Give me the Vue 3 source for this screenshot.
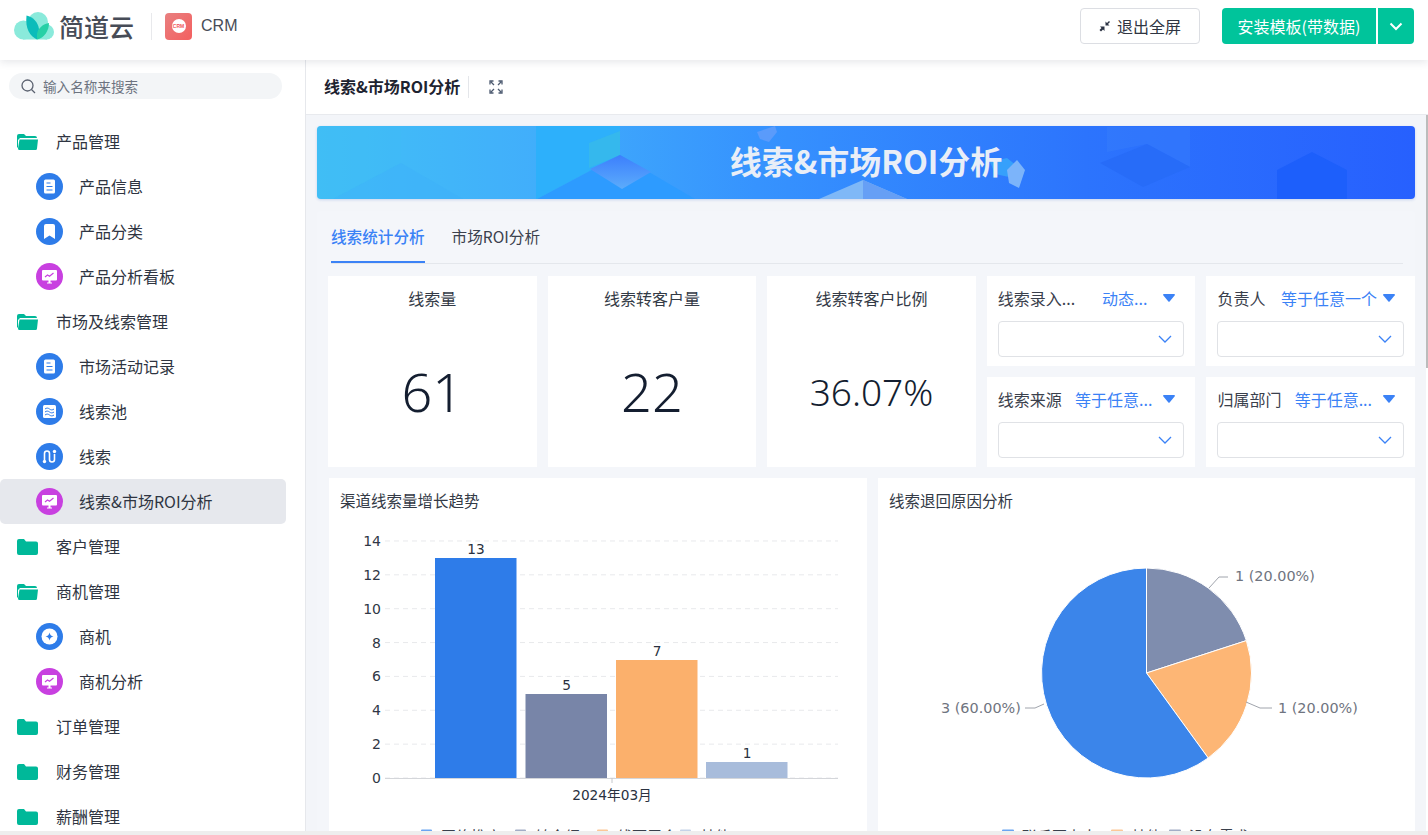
<template>
  <div class="page">
    <header class="topbar">
      <div class="brand">
        <svg class="logo" width="40" height="28" viewBox="14 12 40 28">
          <circle cx="23.500" cy="30" r="9.500" fill="#8aeadb" />
          <circle cx="38" cy="22" r="10" fill="#8aeadb" />
          <circle cx="46.500" cy="32" r="7.500" fill="#8aeadb" />
          <rect x="23" y="24" width="24" height="15.500" fill="#8aeadb" />
          <path d="M37 39.500C30 36 25 29 26.500 15.500C33 17 38 22 39 29Z" fill="#0bbcba" />
          <path d="M37 39.500C44 38 49 31 49 23C43 24 38 28 37 34Z" fill="#27d0a6" />
        </svg>
        <span class="brand-name">简道云</span>
        <i class="brand-split"></i>
        <div class="app-tile">
          <span class="app-dot">CRM</span>
        </div>
        <span class="app-name">CRM</span>
      </div>
      <div class="actions">
        <button class="btn-exit">
          <svg width="12" height="12" viewBox="0 0 12 12" fill="#2b3243">
            <path d="M5.500 6.500V11L4 9.500 2 11.500 .5 10 2.500 8 1 6.500Z" />
            <path d="M6.500 5.500V1.500L8 3 10 1 11 2 9 4 10.500 5.500Z" />
          </svg>
          退出全屏
        </button>
        <div class="install">
          <button class="btn-install">安装模板(带数据)</button>
          <button class="btn-more">
            <svg width="14" height="9" viewBox="0 0 14 9" fill="none" stroke="#fff" stroke-width="2">
              <path d="M1.500 1.500 7 7l5.500-5.500" />
            </svg>
          </button>
        </div>
      </div>
    </header>

    <div class="body">
      <aside class="sidebar">
        <div class="search">
          <svg width="15" height="15" viewBox="0 0 15 15" fill="none" stroke="#5b6270" stroke-width="1.300">
            <circle cx="6.500" cy="6.500" r="5.500" />
            <path d="M10.500 10.500 14 14" />
          </svg>
          <span>输入名称来搜索</span>
        </div>
        <ul class="menu">
          <li
            v-for="item in menu"
            :key="item.label"
            :class="[item.icon ? 'child' : 'group', { active: item.active }]"
          >
            <template v-if="!item.icon">
              <svg width="21" height="16" viewBox="0 0 21 16">
                <template v-if="item.open">
                  <path d="M0 2a2 2 0 0 1 2-2h5l2 2h9a2 2 0 0 1 2 2H3L1 6v8L0 13Z" fill="#00b899" />
                  <path d="M2.500 5.500H21l-1 9a1.500 1.500 0 0 1-1.500 1.500H2.500A1.500 1.500 0 0 1 1 14.500Z" fill="#00b899" />
                </template>
                <path v-else d="M0 2a2 2 0 0 1 2-2h5l2 2.500h10a2 2 0 0 1 2 2V14a2 2 0 0 1-2 2H2a2 2 0 0 1-2-2Z" fill="#00b899" />
              </svg>
            </template>
            <span v-else class="badge" :class="item.icon === 'board' ? 'purple' : 'blue'">
              <svg width="27" height="27" viewBox="0 0 27 27">
                <template v-if="item.icon === 'doc'">
                  <rect x="8" y="6.500" width="11" height="14" rx="1.500" fill="#fff" />
                  <path d="M10.500 10h4M10.500 13.500h6M10.500 17h6" stroke="#2e7ce9" stroke-width="1.200" />
                </template>
                <path v-if="item.icon === 'mark'" d="M8 8a2 2 0 0 1 2-2h7a2 2 0 0 1 2 2v13l-5.500-3.500L8 21Z" fill="#fff" />
                <template v-if="item.icon === 'board'">
                  <rect x="6" y="7" width="15" height="10.500" rx="1" fill="#fff" />
                  <path d="M11 19.500h5v1h-5ZM12.500 17h2v3h-2Z" fill="#fff" />
                  <path d="M9 14l2.500-2 2 1.200L17.500 10" fill="none" stroke="#c840e0" stroke-width="1.200" />
                </template>
                <template v-if="item.icon === 'wave'">
                  <rect x="7" y="7" width="13" height="13" rx="1.500" fill="#fff" />
                  <path d="M9 11c1.500-1.200 3-1.200 4.500 0s3 1.200 4.500 0M9 14c1.500-1.200 3-1.200 4.500 0s3 1.200 4.500 0M9 17c1.500-1.200 3-1.200 4.500 0s3 1.200 4.500 0" fill="none" stroke="#2e7ce9" stroke-width="1" />
                </template>
                <template v-if="item.icon === 'flow'">
                  <path d="M8.500 17V10.500a2.500 2.500 0 0 1 5 0v6a2.500 2.500 0 0 0 5 0V11" fill="none" stroke="#fff" stroke-width="1.600" />
                  <circle cx="8.500" cy="18.500" r="1.700" fill="#fff" />
                  <circle cx="18.500" cy="8.500" r="1.700" fill="#fff" />
                </template>
                <template v-if="item.icon === 'star'">
                  <circle cx="13.500" cy="13.500" r="8" fill="#fff" />
                  <path d="M13.500 9.500c.5 2.500 1.500 3.500 4 4-2.500.5-3.500 1.500-4 4-.5-2.500-1.500-3.500-4-4 2.500-.5 3.500-1.500 4-4Z" fill="#2e7ce9" />
                </template>
              </svg>
            </span>
            <span class="menu-label">{{ item.label }}</span>
          </li>
        </ul>
      </aside>

      <main class="main">
        <div class="toolbar">
          <span class="toolbar-title">线索&amp;市场ROI分析</span>
          <i class="toolbar-split"></i>
          <svg width="14" height="14" viewBox="0 0 14 14" fill="none" stroke="#4c5a70" stroke-width="1.300">
            <path d="M1 4.500V1h3.500M9.500 1H13v3.500M13 9.500V13H9.500M4.500 13H1V9.500M2 2l3 3M12 2 9 5M12 12 9 9M2 12l3-3" />
          </svg>
        </div>
        <div class="content">
          <div class="banner">
            <svg class="banner-art" width="1098" height="73" viewBox="317 126 1098 73">
              <defs>
                <linearGradient id="bannerBg" x1="0" x2="1" y1="0" y2="0">
                  <stop offset="0" stop-color="#41c0f6" />
                  <stop offset=".2" stop-color="#41aefb" />
                  <stop offset=".4" stop-color="#3693fe" />
                  <stop offset=".7" stop-color="#2c74fd" />
                  <stop offset="1" stop-color="#2760fe" />
                </linearGradient>
                <linearGradient id="gem" x1="0" x2="0" y1="0" y2="1">
                  <stop offset="0" stop-color="#3c7ffd" />
                  <stop offset="1" stop-color="#5cacfb" />
                </linearGradient>
              </defs>
              <rect x="317" y="126" width="1098" height="73" fill="url(#bannerBg)" />
              <path d="M317 126h84v37l-68 36h-16Z" fill="#3fbcf4" opacity=".4" />
              <path d="M333 199 401 163l62 36Z" fill="#3cb0fb" opacity=".4" />
              <path d="M536 126h84v29l-83 44h-1Z" fill="#2db0fb" />
              <path d="M589 143 620 131V155L589 168Z" fill="#3dbfe0" opacity=".5" />
              <path d="M537 199 620 155l75 44Z" fill="#2d9bff" />
              <path d="M590 169 620 155l31 17-29 17Z" fill="url(#gem)" />
              <path d="M757 132l18-6 2 6-8 10-9-3Z" fill="#5a9bfb" />
              <path d="M819 199 863 180l44 19Z" fill="#7fb8f7" />
              <path d="M863 180l44 19h-44Z" fill="#669ff5" />
              <path d="M990 162l17-4 10 8-8 11-14-3Z" fill="#36a0fb" />
              <path d="M1007 170l10-10 8 10-6 18-10-5Z" fill="#7cb4fa" />
              <path d="M1107 127h83v40l-43-23-40 8Z" fill="#3a80fb" opacity=".4" />
              <path d="M1100 163l47-19 43 23-47 20Z" fill="#276cf8" />
              <path d="M1277 170l35-18 35 18v29h-70Z" fill="#1d5ffb" />
            </svg>
            <span class="banner-title">线索&amp;市场ROI分析</span>
          </div>

          <section class="panel">
            <div class="tabs">
              <span class="tab on">线索统计分析</span>
              <span class="tab">市场ROI分析</span>
            </div>

            <div class="top-grid">
              <div v-for="s in stats" :key="s.title" class="stat">
                <div class="stat-title">{{ s.title }}</div>
                <div class="stat-num" :class="{ small: s.small }">{{ s.value }}</div>
              </div>
              <div v-for="f in filters" :key="f.label" class="filter" :class="f.cls">
                <div class="filter-head">
                  <span class="filter-label">{{ f.label }}</span>
                  <span class="filter-op">{{ f.op }}</span>
                  <svg width="12" height="8" viewBox="0 0 12 8" fill="#3b82f6">
                    <path d="M.8 0h10.400a.8.8 0 0 1 .6 1.300L6.600 7.400a.8.8 0 0 1-1.200 0L.2 1.300A.8.8 0 0 1 .8 0Z" />
                  </svg>
                </div>
                <div class="filter-input">
                  <svg width="14" height="8" viewBox="0 0 14 8" fill="none" stroke="#3b82f6" stroke-width="1.300">
                    <path d="M1 1l6 6 6-6" />
                  </svg>
                </div>
              </div>
            </div>

            <div class="chart-grid">
              <div class="chart-card">
                <div class="chart-title">渠道线索量增长趋势</div>
                <svg class="chart" width="538" height="340" viewBox="329 524 538 340">
                  <line
                    v-for="t in ticks"
                    :key="t.label"
                    x1="385"
                    x2="838"
                    :y1="t.y"
                    :y2="t.y"
                    stroke="#e8e9ec"
                    stroke-dasharray="5 4"
                  />
                  <text
                    v-for="t in ticks"
                    :key="'l' + t.label"
                    x="381"
                    :y="t.y + 5"
                    text-anchor="end"
                    class="axis-text"
                  >{{ t.label }}</text>
                  <template v-for="b in bars" :key="b.x">
                    <rect :x="b.x" :y="b.y" width="81.500" :height="778 - b.y" :fill="b.color" />
                    <text :x="b.x + 41" :y="b.y - 4.500" text-anchor="middle" class="bar-text">{{ b.value }}</text>
                  </template>
                  <line x1="385" x2="838" y1="778.500" y2="778.500" stroke="#d4d6da" />
                  <line x1="612" x2="612" y1="778" y2="783" stroke="#c4c6ca" />
                  <text x="612" y="800" text-anchor="middle" class="bar-text">2024年03月</text>
                  <template v-for="l in barLegend" :key="l.x">
                    <rect :x="l.x" y="829.500" width="11" height="11" rx="1" :fill="l.color" />
                    <text :x="l.x + 20" y="842" class="legend-text">{{ l.text }}</text>
                  </template>
                </svg>
              </div>

              <div class="chart-card">
                <div class="chart-title">线索退回原因分析</div>
                <svg class="chart" width="537" height="340" viewBox="878 524 537 340">
                  <path d="M1146.500 673V568A105 105 0 0 1 1246.400 640.600Z" fill="#7f8dae" stroke="#fff" />
                  <path d="M1146.500 673 1246.400 640.600A105 105 0 0 1 1208.200 758Z" fill="#fdb675" stroke="#fff" />
                  <path d="M1146.500 673 1208.200 758A105 105 0 1 1 1146.500 568Z" fill="#3b85ea" stroke="#fff" />
                  <path d="M1209 588 1219 577H1228" class="leader" />
                  <path d="M1246 702 1260 708H1272" class="leader" />
                  <path d="M1044 704 1035 708H1025" class="leader" />
                  <text x="1235" y="581" class="pie-text">1 (20.00%)</text>
                  <text x="1278" y="713" class="pie-text">1 (20.00%)</text>
                  <text x="941" y="713" class="pie-text">3 (60.00%)</text>
                  <template v-for="l in pieLegend" :key="l.x">
                    <rect :x="l.x" y="829.500" width="12" height="11" rx="1" :fill="l.color" />
                    <text :x="l.x + 20" y="842" class="legend-text">{{ l.text }}</text>
                  </template>
                </svg>
              </div>
            </div>
          </section>
        </div>
        <i class="scroll-thumb"></i>
      </main>
    </div>
    <div class="bottom-strip"></div>
  </div>
</template>

<script setup>
const menu = [
  { label: '产品管理', open: true },
  { label: '产品信息', icon: 'doc' },
  { label: '产品分类', icon: 'mark' },
  { label: '产品分析看板', icon: 'board' },
  { label: '市场及线索管理', open: true },
  { label: '市场活动记录', icon: 'doc' },
  { label: '线索池', icon: 'wave' },
  { label: '线索', icon: 'flow' },
  { label: '线索&市场ROI分析', icon: 'board', active: true },
  { label: '客户管理' },
  { label: '商机管理', open: true },
  { label: '商机', icon: 'star' },
  { label: '商机分析', icon: 'board' },
  { label: '订单管理' },
  { label: '财务管理' },
  { label: '薪酬管理' },
]

const stats = [
  { title: '线索量', value: '61' },
  { title: '线索转客户量', value: '22' },
  { title: '线索转客户比例', value: '36.07%', small: true },
]

const filters = [
  { label: '线索录入...', op: '动态...', cls: 'f1' },
  { label: '负责人', op: '等于任意一个', cls: 'f2' },
  { label: '线索来源', op: '等于任意...', cls: 'f3' },
  { label: '归属部门', op: '等于任意...', cls: 'f4' },
]

// y axis of the bar chart: 0 sits at 778, one unit is 16.93px
const ticks = [14, 12, 10, 8, 6, 4, 2, 0].map((n) => ({ label: n, y: 778 - n * 16.93 }))

const bars = [
  { x: 435, y: 558, value: 13, color: '#2e7ce9' },
  { x: 525.5, y: 694, value: 5, color: '#7885a8' },
  { x: 616, y: 660, value: 7, color: '#fbb06c' },
  { x: 706, y: 762, value: 1, color: '#a8bcdb' },
]

// legend rows are cut by the page edge, only the top of the glyphs shows
const barLegend = [
  { x: 421, text: '网络推广', color: '#6aa5f2' },
  { x: 515, text: '转介绍', color: '#a3adc6' },
  { x: 597, text: '线下展会', color: '#fcc898' },
  { x: 680, text: '其他', color: '#c6d3e8' },
]

const pieLegend = [
  { x: 1002, text: '联系不上人', color: '#6aa5f2' },
  { x: 1111, text: '其他', color: '#fcc898' },
  { x: 1169, text: '没有需求', color: '#a3adc6' },
]
</script>

<style>
html,
body {
  margin: 0;
  height: 100%;
  overflow: hidden;
  background: #fff;
}
</style>

<style scoped>
.page {
  height: 835px;
  display: flex;
  flex-direction: column;
  font-family: "Noto Sans CJK SC", "Noto Sans", sans-serif;
  color: #2f3542;
  overflow: hidden;
}

.topbar {
  flex: none;
  height: 60px;
  padding: 0 14px;
  box-sizing: border-box;
  display: flex;
  align-items: flex-start;
  justify-content: space-between;
  background: #fff;
  box-shadow: 0 2px 8px rgba(40, 50, 70, 0.12);
  position: relative;
  z-index: 2;
}

.brand {
  display: flex;
  align-items: center;
  height: 52px;
}

.brand-name {
  margin-left: 5px;
  font-size: 25px;
  font-weight: 500;
  color: #474c57;
  white-space: nowrap;
}

.brand-split {
  width: 1px;
  height: 27px;
  margin: 0 13px 0 17px;
  background: #e8e9ec;
}

.app-tile {
  width: 27px;
  height: 27px;
  border-radius: 4px;
  background: linear-gradient(135deg, #e88080, #f45f5f);
  display: flex;
  align-items: center;
  justify-content: center;
}

.app-dot {
  width: 14px;
  height: 14px;
  border-radius: 50%;
  background: #fff;
  color: #f0585c;
  font-family: "Liberation Sans", sans-serif;
  font-size: 5px;
  font-weight: 700;
  line-height: 14px;
  text-align: center;
}

.app-name {
  margin-left: 9px;
  font-family: "Liberation Sans", Arial, sans-serif;
  font-size: 16px;
  color: #474c57;
}

.actions {
  display: flex;
  padding-top: 8px;
}

button {
  font-family: inherit;
  font-size: 16px;
  cursor: pointer;
}

.btn-exit {
  width: 120px;
  height: 36px;
  padding: 0;
  display: flex;
  align-items: center;
  justify-content: center;
  gap: 6px;
  background: #fff;
  border: 1px solid #dcdee3;
  border-radius: 4px;
  color: #2f3542;
}

.install {
  display: flex;
  gap: 2px;
  margin-left: 22px;
}

.btn-install,
.btn-more {
  height: 36px;
  padding: 0;
  border: 0;
  background: #00c49b;
  color: #fff;
}

.btn-install {
  width: 154px;
  border-radius: 4px 0 0 4px;
}

.btn-more {
  width: 36px;
  border-radius: 0 4px 4px 0;
  display: flex;
  align-items: center;
  justify-content: center;
}

.body {
  flex: 1;
  min-height: 0;
  display: flex;
}

.sidebar {
  flex: none;
  width: 306px;
  box-sizing: border-box;
  border-right: 1px solid #e6e8ec;
  padding-top: 13px;
  overflow: hidden;
  background: #fff;
}

.search {
  width: 273px;
  height: 26px;
  margin-left: 9px;
  padding-left: 12px;
  box-sizing: border-box;
  display: flex;
  align-items: center;
  gap: 7px;
  border-radius: 13px;
  background: #f3f5f7;
  font-size: 13.600px;
  color: #6c7380;
}

.menu {
  list-style: none;
  margin: 20px 0 0;
  padding: 0;
}

.menu li {
  width: 286px;
  height: 45px;
  box-sizing: border-box;
  display: flex;
  align-items: center;
  font-size: 16px;
  white-space: nowrap;
}

.menu-label {
  padding-bottom: 2px;
}

.group {
  padding-left: 17px;
}

.group .menu-label {
  margin-left: 18px;
}

.child {
  padding-left: 36px;
}

.child .menu-label {
  margin-left: 16px;
}

.menu li.active {
  background: #e6e8ed;
  border-radius: 5px;
}

.badge {
  width: 27px;
  height: 27px;
  border-radius: 50%;
  display: flex;
}

.badge.blue {
  background: #2e7ce9;
}

.badge.purple {
  background: #c840e0;
}

.main {
  flex: 1;
  min-width: 0;
  display: flex;
  flex-direction: column;
  position: relative;
  background: #fff;
}

.toolbar {
  flex: none;
  height: 55px;
  box-sizing: border-box;
  padding-left: 18px;
  display: flex;
  align-items: center;
  border-bottom: 1px solid #e8eaee;
}

.toolbar-title {
  font-size: 16px;
  font-weight: 700;
  color: #1d2330;
  white-space: nowrap;
  padding-bottom: 2px;
}

.toolbar-split {
  width: 1px;
  height: 22px;
  margin: 0 20px 0 8px;
  background: #e4e6ea;
}

.content {
  flex: 1;
  min-height: 0;
  overflow: hidden;
  margin-right: 2px;
  padding: 11px 11px 0;
  background: #f3f5f9;
}

.banner {
  position: relative;
  height: 73px;
  border-radius: 4px;
  overflow: hidden;
  display: flex;
  align-items: center;
  justify-content: center;
  box-shadow: 0 1px 3px rgba(40, 90, 200, 0.2);
}

.banner-art {
  position: absolute;
  left: 0;
  top: 0;
}

.banner-title {
  position: relative;
  padding-bottom: 5px;
  font-size: 32px;
  font-weight: 700;
  color: #e9eef7;
  white-space: nowrap;
}

.panel {
  margin-top: 12px;
  padding-left: 11px;
  background: #f4f6fa;
  border-radius: 4px 4px 0 0;
}

.tabs {
  height: 52px;
  margin: 0 12px 0 3px;
  display: flex;
  gap: 27px;
  border-bottom: 1px solid #e4e7ec;
  font-size: 15.600px;
}

.tab {
  height: 52px;
  box-sizing: border-box;
  padding-top: 12px;
  line-height: 26px;
  color: #3b414d;
  white-space: nowrap;
}

.tab.on {
  color: #3b82f6;
  font-weight: 500;
  border-bottom: 2px solid #3b82f6;
}

.top-grid {
  margin-top: 12px;
  display: grid;
  grid-template-columns: repeat(5, 1fr);
  grid-template-rows: 90px 90px;
  gap: 11px;
}

.stat {
  grid-row: 1 / span 2;
  display: flex;
  flex-direction: column;
  background: #fff;
  padding-top: 10px;
  text-align: center;
}

.stat-title {
  font-size: 16px;
  line-height: 24px;
  color: #333a46;
}

.stat-num {
  flex: 1;
  padding-top: 5px;
  display: flex;
  align-items: center;
  justify-content: center;
  font-family: "Noto Sans", sans-serif;
  font-size: 54px;
  font-weight: 300;
  color: #141e30;
}

.stat-num.small {
  font-size: 37px;
}

.filter {
  background: #fff;
  padding: 10px 11px 0;
}

.f1 {
  grid-column: 4;
  grid-row: 1;
}

.f2 {
  grid-column: 5;
  grid-row: 1;
}

.f3 {
  grid-column: 4;
  grid-row: 2;
}

.f4 {
  grid-column: 5;
  grid-row: 2;
}

.filter-head {
  height: 24px;
  display: flex;
  align-items: center;
  padding-right: 9px;
  font-size: 16px;
  white-space: nowrap;
}

.filter-label {
  color: #3a404c;
}

.filter-op {
  margin-left: auto;
  margin-right: 11px;
  color: #3b82f6;
}

.f1 .filter-op {
  margin-right: 16px;
}

.f2 .filter-op {
  margin-right: 6px;
}

.filter-input {
  height: 36px;
  margin-top: 11px;
  box-sizing: border-box;
  display: flex;
  align-items: center;
  justify-content: flex-end;
  padding-right: 11px;
  border: 1px solid #e0e2e6;
  border-radius: 4px;
  background: #fff;
}

.chart-grid {
  margin-top: 11px;
  display: grid;
  grid-template-columns: 538px 537px;
  gap: 11px;
  margin-left: 1px;
}

.chart-card {
  background: #fff;
  height: 386px;
}

.chart-title {
  height: 46px;
  padding-left: 11px;
  font-size: 15.500px;
  line-height: 44px;
  color: #333a46;
}

.chart {
  display: block;
}

.axis-text {
  font-family: "DejaVu Sans", sans-serif;
  font-size: 14px;
  fill: #303745;
}

.bar-text {
  font-family: "DejaVu Sans", "Noto Sans CJK SC", sans-serif;
  font-size: 13.700px;
  fill: #2a3140;
}

.legend-text {
  font-size: 15px;
  fill: #3a404c;
}

.pie-text {
  font-family: "DejaVu Sans", sans-serif;
  font-size: 14.400px;
  fill: #6f7480;
}

.leader {
  fill: none;
  stroke: #a0a4ac;
}

.scroll-thumb {
  position: absolute;
  right: 0;
  top: 55px;
  width: 2px;
  height: 253px;
  background: #bcbcbc;
}

.bottom-strip {
  flex: none;
  height: 4px;
  background: #eeeeee;
}
</style>
